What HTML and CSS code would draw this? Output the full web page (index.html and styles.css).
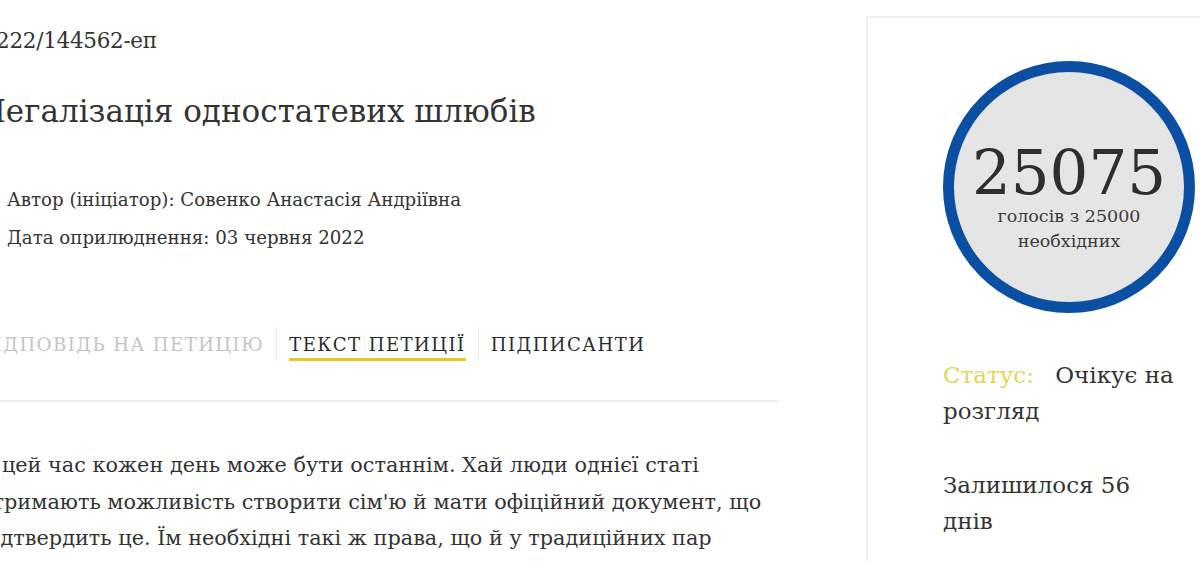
FILE: index.html
```html
<!DOCTYPE html>
<html lang="uk">
<head>
<meta charset="utf-8">
<title>Петиція №22/144562-еп</title>
<link rel="stylesheet" href="styles.css">
</head>
<body>
<div class="page">
  <main class="main">
    <div class="number">№222/144562-еп</div>
    <h1 class="title">Легалізація одностатевих шлюбів</h1>
    <div class="info">
      <div class="info-row">Автор (ініціатор): Совенко Анастасія Андріївна</div>
      <div class="info-row">Дата оприлюднення: 03 червня 2022</div>
    </div>
    <nav class="tabs">
      <span class="tab tab-disabled">Відповідь на петицію</span>
      <span class="tab-sep"></span>
      <span class="tab tab-active">Текст петиції</span>
      <span class="tab-sep"></span>
      <span class="tab">Підписанти</span>
    </nav>
    <div class="divider"></div>
    <div class="text">
      В цей час кожен день може бути останнім. Хай люди однієї статі<br>
      отримають можливість створити сім'ю й мати офіційний документ, що<br>
      підтвердить це. Їм необхідні такі ж права, що й у традиційних пар
    </div>
  </main>
  <aside class="sidebar">
    <div class="counter">
      <div class="count">25075</div>
      <div class="count-label">голосів з 25000<br>необхідних</div>
    </div>
    <div class="status"><span class="status-label">Статус:</span> Очікує на розгляд</div>
    <div class="remaining">Залишилося 56 днів</div>
  </aside>
</div>
</body>
</html>
```
FILE: styles.css
```css
html, body {
  margin: 0;
  padding: 0;
  background: #ffffff;
}
body {
  width: 1200px;
  height: 561px;
  overflow: hidden;
  font-family: "DejaVu Serif", "Liberation Serif", serif;
  color: #333333;
}
.page {
  display: flex;
  align-items: flex-start;
  margin-left: -20px;
}
.main {
  width: 798px;
  flex: none;
}
.number {
  margin-top: 28px;
  font-size: 21.5px;
  line-height: 26px;
  margin-left: -4px;
  letter-spacing: -0.3px;
}
.title {
  margin: 37px 0 0 0;
  font-size: 31px;
  font-weight: normal;
  line-height: 40px;
  color: #333333;
}
.info {
  margin-top: 50px;
  padding-left: 27px;
  font-size: 18.2px;
  line-height: 38px;
}
.tabs {
  display: flex;
  align-items: stretch;
  margin-top: 70px;
  height: 34px;
}
.tab {
  display: flex;
  align-items: center;
  padding: 0 12px;
  font-size: 18px;
  text-transform: uppercase;
  letter-spacing: 1.5px;
  color: #2b2b2b;
  white-space: nowrap;
}
.tab:first-child {
  padding-left: 0;
}
.tab-disabled {
  color: #c4c4c4;
}
.tab-active {
  box-shadow: inset 0 -3px 0 #e6c724;
  margin: 0 12px;
  padding: 0;
}
.tab-sep {
  width: 1px;
  background: #ececec;
}
.divider {
  margin-top: 39px;
  height: 2px;
  background: #ededed;
}
.text {
  margin-top: 45px;
  font-size: 20.8px;
  line-height: 36.5px;
  color: #333333;
  white-space: nowrap;
}
.sidebar {
  flex: none;
  margin-left: 88px;
  margin-top: 16px;
  width: 330px;
  height: 600px;
  border-top: 2px solid #f1f1f1;
  border-left: 2px solid #f1f1f1;
  padding: 43px 0 0 75px;
}
.counter {
  box-sizing: border-box;
  width: 252px;
  height: 252px;
  border-radius: 50%;
  border: 11px solid #0b4fa3;
  background: #e5e5e5;
  display: flex;
  flex-direction: column;
  align-items: center;
  justify-content: center;
  padding-top: 22px;
}
.count {
  font-size: 61px;
  line-height: 62px;
  color: #2e2e2e;
}
.count-label {
  font-size: 17.5px;
  line-height: 25px;
  text-align: center;
  color: #3a3a3a;
}
.status {
  margin-top: 44px;
  font-size: 23px;
  line-height: 36px;
  width: 240px;
  color: #333333;
}
.status-label {
  color: #e6d253;
  margin-right: 14px;
}
.remaining {
  margin-top: 38px;
  font-size: 23px;
  line-height: 36px;
  width: 200px;
  color: #333333;
}
```
